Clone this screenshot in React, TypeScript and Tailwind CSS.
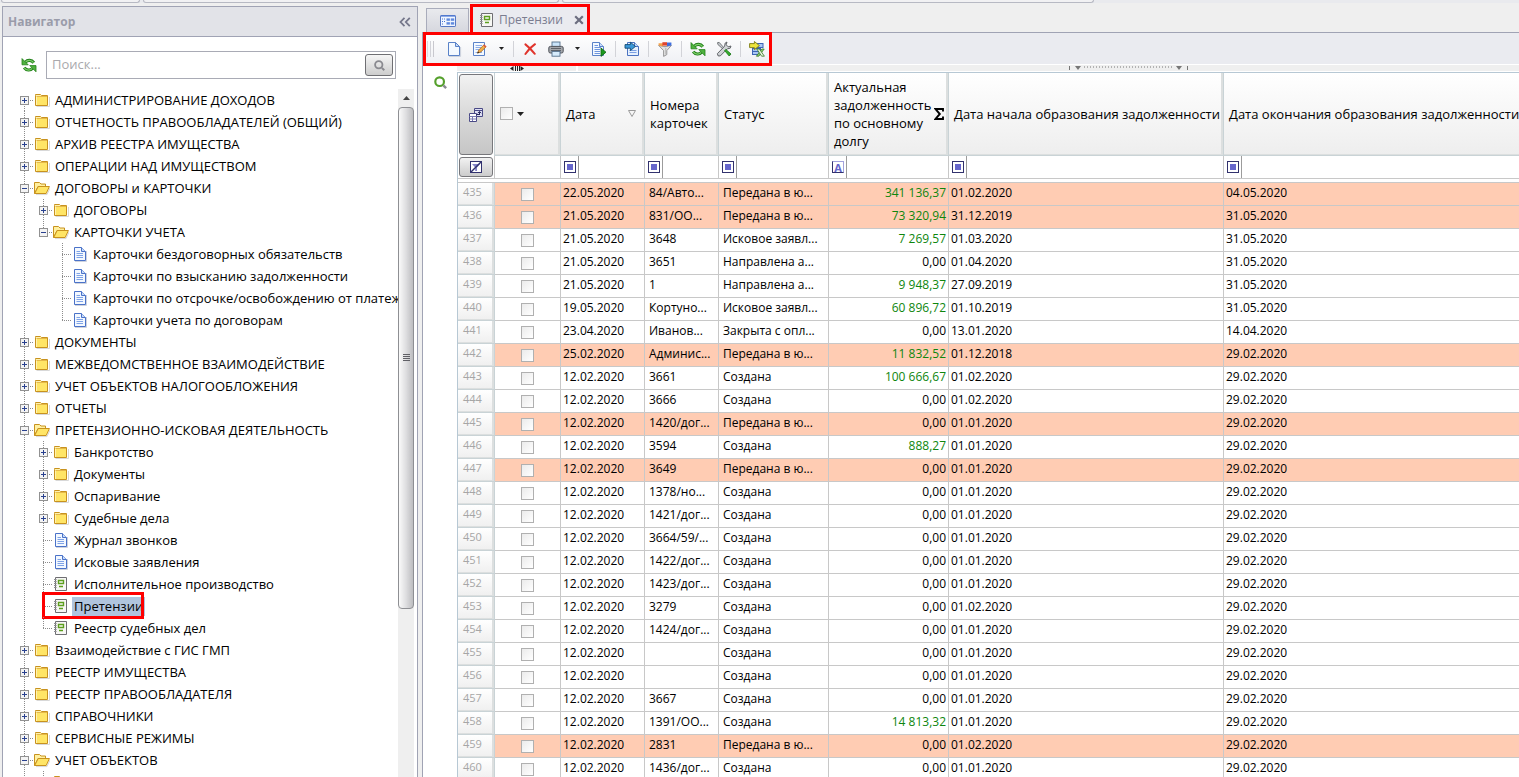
import React from "react";

/* ---------- icons ---------- */

type IconProps = { className?: string };

const Svg = ({ children, className = "size-4", box = "0 0 16 16" }: { children: React.ReactNode; className?: string; box?: string }) => (
  <svg viewBox={box} className={`shrink-0 ${className}`} fill="none" aria-hidden="true">
    {children}
  </svg>
);

const RefreshIcon = ({ className }: IconProps) => (
  <Svg className={className}>
    <path d="M4.4 5.2C6.6 2.6 10.6 2.8 12.8 5.8" stroke="#23801a" strokeWidth="3.2" />
    <path d="M4.4 5.2C6.6 2.6 10.6 2.8 12.6 5.6" stroke="#7fd06c" strokeWidth="1.3" />
    <path d="M1 1.6V7.8H7.2Z" fill="#4fb33e" stroke="#23801a" strokeWidth=".8" strokeLinejoin="round" />
    <path d="M11.6 11.2C9.4 13.8 5.4 13.6 3.2 10.6" stroke="#23801a" strokeWidth="3.2" />
    <path d="M11.6 11.2C9.4 13.8 5.4 13.6 3.4 10.8" stroke="#7fd06c" strokeWidth="1.3" />
    <path d="M15 14.8V8.6H8.8Z" fill="#4fb33e" stroke="#23801a" strokeWidth=".8" strokeLinejoin="round" />
  </Svg>
);

const FolderIcon = () => (
  <Svg>
    <path d="M2.5 14.5H15.5V5" stroke="#d8d8d8" />
    <path d="M1.5 3.5V2.5H6.5L7.5 3.5H13.5V13.5H1.5Z" fill="#fff2b0" stroke="#c8921e" />
    <path d="M2.5 4.5H13" stroke="#e5b84a" />
    <rect x="3" y="5" width="10" height="8" fill="#ffe566" />
  </Svg>
);

const FolderOpenIcon = () => (
  <Svg>
    <path d="M2 14.6H13L16 8" stroke="#d8d8d8" />
    <path d="M.5 13.5V2.5H5.5L7 4H11.5V6.5H4Z" fill="#fff0a0" stroke="#c8921e" />
    <path d="M.7 13.5L4.2 6.5H15.4L12.2 13.5Z" fill="#ffe566" stroke="#c8921e" strokeLinejoin="round" />
  </Svg>
);

const DocIcon = () => (
  <Svg>
    <path d="M3 15.5H14.5V5" stroke="#cfd3dd" />
    <path d="M2.5 1.5H9.5L13.5 5.5V14.5H2.5Z" fill="#f3f8ff" stroke="#4a72c8" />
    <path d="M9.5 1.5V5.5H13.5" fill="#c8dcfa" stroke="#4a72c8" />
    <path d="M4.5 5.5H8M4.5 7.5H11M4.5 9.5H11M4.5 11.5H11" stroke="#7fa3e6" />
  </Svg>
);

const JournalIcon = () => (
  <Svg>
    <path d="M2.5 1.5H13.5V14.5H2.5Z" fill="#f7f7f5" stroke="#6e6e72" />
    <path d="M1 3.5H3.6M1 5.5H3.6M1 7.5H3.6M1 9.5H3.6M1 11.5H3.6" stroke="#8c8c90" />
    <path d="M5.5 4.5H10.5V7.5H5.5ZM6 10.5H10" stroke="#5c9e1e" strokeWidth="1.4" />
  </Svg>
);

const NewIcon = () => (
  <Svg>
    <path d="M3 15.4H14.6V6" stroke="#c9cfdb" />
    <path d="M2.5 1.5H9.5L13.5 5.5V14.5H2.5Z" fill="#f4f9ff" stroke="#5a82c8" />
    <path d="M9.5 1.5V5.5H13.5Z" fill="#c6dafa" stroke="#5a82c8" />
  </Svg>
);

const EditIcon = () => (
  <Svg>
    <path d="M1.5 1.5H12.5V14.5H1.5Z" fill="#f4f9ff" stroke="#5a82c8" />
    <path d="M3.5 4.5H10M3.5 6.5H9M3.5 8.5H7M3.5 11.5H10" stroke="#8caCE6" />
    <path d="M5.6 12L6.8 9L12 3.8L14 5.8L8.8 11Z" fill="#f0b04a" stroke="#a8641e" strokeWidth=".8" />
    <path d="M11.2 4.6L13.2 6.6L14.4 5.4L12.4 3.4Z" fill="#e0523c" />
    <path d="M5.2 12.6L7.2 11.8L6 10.6Z" fill="#222" />
  </Svg>
);

const DeleteIcon = () => (
  <Svg>
    <path d="M3.4 3.4C6 5.4 9.6 9 12.8 12.8M13 3.2C9.4 5.6 6.2 9 3.4 13" stroke="#e0342c" strokeWidth="2" strokeLinecap="round" />
  </Svg>
);

const PrintIcon = () => (
  <Svg>
    <rect x="4" y="1" width="8" height="5" fill="#c9e4fa" stroke="#54708c" strokeWidth=".9" />
    <rect x=".8" y="5.4" width="14.4" height="6.6" rx="1.6" fill="#a4a7ac" stroke="#50545c" />
    <path d="M3 7.5H13M3 9.5H13" stroke="#5f636a" />
    <rect x="4" y="10.4" width="8" height="4.8" fill="#d6ebfb" stroke="#54708c" strokeWidth=".9" />
  </Svg>
);

const RunIcon = () => (
  <Svg>
    <path d="M1.5 1.5H8.5L12.5 5.5V14.5H1.5Z" fill="#f4f9ff" stroke="#5a82c8" />
    <path d="M8.5 1.5V5.5H12.5" fill="#c6dafa" stroke="#5a82c8" />
    <path d="M3.5 4.5H7M3.5 6.5H10M3.5 8.5H9M3.5 10.5H9M3.5 12.5H9" stroke="#6f96de" />
    <path d="M10 7L15 11.2L10 15.4Z" fill="#1c9a1c" stroke="#0c6210" strokeWidth=".8" />
  </Svg>
);

const ImportIcon = () => (
  <Svg>
    <path d="M3.5 1.5H10.5L14.5 5.5V14.5H3.5Z" fill="#e6f0fe" stroke="#4a72c0" />
    <path d="M10.5 1.5V5.5H14.5" fill="#c6dafa" stroke="#4a72c0" />
    <path d="M5.5 9.5H12.5M5.5 11.5H12.5" stroke="#7ba0e4" />
    <path d="M1 3.6H6.4V1.2L11.4 5.4L6.4 9.6V7.2H1Z" fill="#3a98da" stroke="#12496f" strokeWidth=".9" />
  </Svg>
);

const FunnelIcon = () => (
  <Svg>
    <path d="M1.6 4.4Q8 7 14.4 4.4L9.8 9.6V13.6L6.6 15.4V9.6Z" fill="#e4e4e4" stroke="#8c8c8c" strokeWidth=".9" />
    <path d="M8.8 7V13.4" stroke="#b4b4b4" />
    <path d="M1.6 2.2H6V5.4L1.6 4.4Z" fill="#f5a24a" />
    <path d="M5.4 1.2H10V4.6H5.4Z" fill="#e0442c" />
    <path d="M10 1.6H14.4V4.4L10 5.2Z" fill="#3e6ee0" />
  </Svg>
);

const ToolsIcon = () => (
  <Svg>
    <path d="M1.6 1.6L3.2 1.4L9 8L8 9L1.8 3.4Z" fill="#c8ccd0" stroke="#5a5e62" strokeWidth=".8" />
    <path d="M11 1L10.2 3.8L12.2 5.8L15 5L14.2 7.2L11.4 7.8L4.2 15L2 14.8L1.4 12.6L8.6 5.2L9.2 2Z" fill="#d0d3d6" stroke="#56595d" strokeWidth=".9" strokeLinejoin="round" />
    <path d="M8.6 9.6L9.8 8.4L15 13L13.2 15Z" fill="#35b02c" stroke="#147010" strokeWidth=".8" />
  </Svg>
);

const ExportIcon = () => (
  <Svg>
    <rect x="8" y="2.5" width="6" height="4" fill="#a9c6f5" stroke="#3c64b4" />
    <rect x="3.5" y="7.5" width="8" height="6" fill="#a9c6f5" stroke="#3c64b4" />
    <path d="M4 10.5H11" stroke="#3c64b4" />
    <path d="M.6 2.6H5.4V.5L10.4 4.6L5.4 8.7V6.6H.6Z" fill="#ece43c" stroke="#7c7a10" strokeWidth=".9" />
    <path d="M15.2 8H12.8L7.4 15.2H9.8Z" fill="#8ed274" stroke="#3a7a28" strokeWidth=".8" />
    <path d="M7.8 8H10.4L15.4 15.2H12.6Z" fill="#e4f4dc" stroke="#3a7a28" strokeWidth=".8" />
  </Svg>
);

const FormIcon = () => (
  <Svg>
    <rect x=".5" y="2.5" width="15" height="11" rx=".6" fill="#f0f6ff" stroke="#5578c4" />
    <path d="M1 3H15" stroke="#4f7ad6" strokeWidth="1.2" />
    <path d="M2 6H3M4 6H5M2 8.5H3M4 8.5H5M2 11H3" stroke="#4472d4" />
    <rect x="6.5" y="5.4" width="3.4" height="2.4" fill="#5f89de" />
    <rect x="10.8" y="5.4" width="3.4" height="2.4" fill="#5f89de" />
    <rect x="6.5" y="9.2" width="3.4" height="2.4" fill="#5f89de" />
    <rect x="10.8" y="9.2" width="3.4" height="2.4" fill="#5f89de" />
  </Svg>
);

const Lens = ({ color, className = "size-3" }: { color: string; className?: string }) => (
  <Svg className={className} box="0 0 12 12">
    <circle cx="5.2" cy="5.2" r="4" stroke={color} strokeWidth="2" />
    <path d="M8.6 8.6L11.2 11.2" stroke="#8a8a90" strokeWidth="2.2" />
  </Svg>
);

const ChooserIcon = () => (
  <Svg>
    <path d="M6.5 1.5H14.5V9.5H6.5Z" fill="#dfe0f4" stroke="#4a4a86" />
    <path d="M6.5 3.5H14.5" stroke="#4a4a86" />
    <path d="M1.5 6.5H8.5V14.5H1.5Z" fill="#fff" stroke="#4a4a86" />
    <path d="M1.5 9.5H8.5M1.5 12H8.5M4.5 9.5V14" stroke="#7a7ab0" />
    <path d="M8 7.5H12M11.5 8V5M9.8 6.2L11.5 4.4L13.2 6.2" stroke="#2a2a60" />
  </Svg>
);

const ClearFilterIcon = () => (
  <Svg className="h-3 w-3" box="0 0 12 12">
    <rect x=".5" y=".5" width="11" height="11" fill="#fff" stroke="#32326e" />
    <path d="M2 3H10L7 6.4V10H5.2V6.4Z" fill="#8484c8" />
    <path d="M.5 11.5L11.5 .5" stroke="#32326e" strokeWidth="1.4" />
  </Svg>
);

const SquareIcon = () => (
  <Svg className="h-3 w-3" box="0 0 12 12">
    <rect x=".5" y=".5" width="11" height="11" fill="#fff" stroke="#32326e" />
    <rect x="3" y="3" width="6" height="6" fill="#6666cc" />
  </Svg>
);

const Caret = ({ className = "h-1 w-[7px]" }: IconProps) => (
  <Svg className={className} box="0 0 7 4">
    <path d="M0 0H7L3.5 4Z" fill="#222" />
  </Svg>
);

/* ---------- tree ---------- */

type Kind = "closed" | "open" | "doc" | "journal";
type Node = { label: string; depth: number; kind: Kind; last?: boolean; selected?: boolean; guides?: boolean[] };

const f = (label: string, depth: number, last = false): Node => ({ label, depth, kind: "closed", last });
const o = (label: string, depth: number, last = false): Node => ({ label, depth, kind: "open", last });
const d = (label: string, depth: number, last = false, guides?: boolean[]): Node => ({ label, depth, kind: "doc", last, guides });
const j = (label: string, depth: number, last = false, selected = false): Node => ({ label, depth, kind: "journal", last, selected });

const TREE: Node[] = [
  f("АДМИНИСТРИРОВАНИЕ ДОХОДОВ", 0),
  f("ОТЧЕТНОСТЬ ПРАВООБЛАДАТЕЛЕЙ (ОБЩИЙ)", 0),
  f("АРХИВ РЕЕСТРА ИМУЩЕСТВА", 0),
  f("ОПЕРАЦИИ НАД ИМУЩЕСТВОМ", 0),
  o("ДОГОВОРЫ и КАРТОЧКИ", 0),
  f("ДОГОВОРЫ", 1),
  o("КАРТОЧКИ УЧЕТА", 1, true),
  d("Карточки бездоговорных обязательств", 2, false, [true, false]),
  d("Карточки по взысканию задолженности", 2, false, [true, false]),
  d("Карточки по отсрочке/освобождению от платеж", 2, false, [true, false]),
  d("Карточки учета по договорам", 2, true, [true, false]),
  f("ДОКУМЕНТЫ", 0),
  f("МЕЖВЕДОМСТВЕННОЕ ВЗАИМОДЕЙСТВИЕ", 0),
  f("УЧЕТ ОБЪЕКТОВ НАЛОГООБЛОЖЕНИЯ", 0),
  f("ОТЧЕТЫ", 0),
  o("ПРЕТЕНЗИОННО-ИСКОВАЯ ДЕЯТЕЛЬНОСТЬ", 0),
  f("Банкротство", 1),
  f("Документы", 1),
  f("Оспаривание", 1),
  f("Судебные дела", 1),
  d("Журнал звонков", 1),
  d("Исковые заявления", 1),
  j("Исполнительное производство", 1),
  j("Претензии", 1, false, true),
  j("Реестр судебных дел", 1, true),
  f("Взаимодействие с ГИС ГМП", 0),
  f("РЕЕСТР ИМУЩЕСТВА", 0),
  f("РЕЕСТР ПРАВООБЛАДАТЕЛЯ", 0),
  f("СПРАВОЧНИКИ", 0),
  f("СЕРВИСНЫЕ РЕЖИМЫ", 0),
  o("УЧЕТ ОБЪЕКТОВ", 0),
  f("", 1),
];

const Guide = ({ from, to, branch }: { from: number; to: number; branch?: boolean }) => (
  <svg viewBox="0 0 19 22" className="h-[22px] w-[19px] shrink-0" aria-hidden="true">
    {to > from && <path d={`M9.5 ${from}V${to}`} stroke="#8c8c8c" strokeDasharray="1 1" />}
    {branch && <path d="M9 11.5H19" stroke="#8c8c8c" strokeDasharray="1 1" />}
  </svg>
);

const Toggle = ({ open }: { open: boolean }) => (
  <button type="button" aria-label={open ? "Свернуть" : "Развернуть"} className="absolute top-[7px] left-[5px] block size-[9px]">
    <svg viewBox="0 0 9 9" className="size-[9px]">
      <rect x=".5" y=".5" width="8" height="8" fill="#f4f4f4" stroke="#919191" />
      <path d={open ? "M2 4.5H7" : "M2 4.5H7M4.5 2V7"} stroke="#29418f" />
    </svg>
  </button>
);

function TreeRow({ node, first }: { node: Node; first: boolean }) {
  const folder = node.kind === "closed" || node.kind === "open";
  return (
    <li className="relative flex h-[22px] items-center whitespace-nowrap">
      {Array.from({ length: node.depth }, (_, i) => (
        <Guide key={i} from={0} to={!node.guides || node.guides[i] ? 22 : 0} />
      ))}
      <span className="relative flex">
        <Guide from={first ? 11 : 0} to={node.last ? 11 : 22} branch />
        {folder && <Toggle open={node.kind === "open"} />}
      </span>
      {node.kind === "closed" && <FolderIcon />}
      {node.kind === "open" && <FolderOpenIcon />}
      {node.kind === "doc" && <DocIcon />}
      {node.kind === "journal" && <JournalIcon />}
      {node.label && (
        <a href="#" className={`ml-[3px] px-0.5 text-[13px] leading-[19px] text-black ${node.selected ? "bg-[#b0c4de]" : ""}`}>
          {node.label}
        </a>
      )}
      {node.selected && <span className="pointer-events-none absolute -top-[3px] left-[27px] h-[27px] w-[102px] border-[3px] border-[#fe0000]" />}
    </li>
  );
}

function Navigator() {
  return (
    <aside className="mt-[3px] ml-0.5 flex w-[416px] shrink-0 flex-col overflow-hidden border border-b-0 border-[#a0a3b4] bg-white">
      <header className="flex h-[30px] shrink-0 items-center justify-between border-b border-[#a0a3b4] bg-[#e2e3e8] px-[5px]">
        <h2 className="text-[12px] font-bold text-[#9a9caa]">Навигатор</h2>
        <button type="button" aria-label="Свернуть панель" className="mr-px">
          <svg viewBox="0 0 12 10" className="h-[10px] w-3" fill="none" stroke="#74768a" strokeWidth="1.8">
            <path d="M5.5 .8L1.5 5L5.5 9.2M10.8 .8L6.8 5L10.8 9.2" />
          </svg>
        </button>
      </header>
      <div className="flex items-center gap-[9px] pt-[14px] pr-[21px] pl-[18px]">
        <button type="button" aria-label="Обновить дерево">
          <RefreshIcon className="size-4" />
        </button>
        <label className="flex h-7 min-w-0 flex-1 items-center border border-[#a9abb5] pr-0.5 pl-[5px]">
          <input aria-label="Поиск" placeholder="Поиск..." className="min-w-0 flex-1 text-[13px] outline-none placeholder:text-[#a9a9ad]" />
          <button type="button" aria-label="Найти" className="flex h-[22px] w-7 items-center justify-center rounded-[3px] border border-[#6f6f73] bg-linear-to-b from-[#f6f6f6] to-[#cdcdcd]">
            <Lens color="#8a8a90" className="size-[11px]" />
          </button>
        </label>
      </div>
      <div className="mt-[10px] mr-[3px] flex min-h-0 flex-1">
        <ul className="min-w-0 flex-1 overflow-hidden pl-3">
          {TREE.map((n, i) => (
            <TreeRow key={n.label + i} node={n} first={i === 0} />
          ))}
        </ul>
        <div className="flex w-4 shrink-0 flex-col bg-[#efefef]">
          <button type="button" aria-label="Прокрутить вверх" className="flex h-[18px] shrink-0 items-center justify-center">
            <svg viewBox="0 0 7 4" className="h-1 w-[7px]">
              <path d="M0 4H7L3.5 0Z" fill="#444" />
            </svg>
          </button>
          <div className="flex h-[73%] items-center justify-center rounded-sm border border-[#8e8f93] bg-linear-to-r from-[#fafafa] via-[#dedee0] to-[#bdbdc0]">
            <svg viewBox="0 0 7 8" className="h-2 w-[7px]">
              <path d="M0 .5H7M0 2.5H7M0 4.5H7M0 6.5H7" stroke="#606066" />
            </svg>
          </div>
        </div>
      </div>
    </aside>
  );
}

/* ---------- toolbar ---------- */

const Tool = ({ label, children }: { label: string; children: React.ReactNode }) => (
  <button type="button" aria-label={label} title={label} className="flex h-6 w-[26px] items-center justify-center">
    {children}
  </button>
);

const ToolMenu = ({ label }: { label: string }) => (
  <button type="button" aria-label={label} className="flex h-6 w-[17px] items-center justify-center">
    <Caret className="h-[3px] w-[5px]" />
  </button>
);

const Sep = () => (
  <span className="flex w-[7px] justify-center">
    <span className="h-4 w-px bg-[#d2d3d8]" />
  </span>
);

function Toolbar() {
  return (
    <div className="flex h-[31px] bg-[#eaebf0]">
      <div role="toolbar" className="relative flex items-center bg-linear-to-b from-white to-[#eff0f4] pr-px pl-[3px]">
        <span className="mr-[7px] flex h-4 w-[7px] justify-between">
          <span className="w-px bg-[#dcdce0]" />
          <span className="w-px bg-[#d2d2d8]" />
          <span className="w-px bg-[#c8c8ce]" />
        </span>
        <Tool label="Создать"><NewIcon /></Tool>
        <Tool label="Редактировать"><EditIcon /></Tool>
        <ToolMenu label="Варианты редактирования" />
        <Sep />
        <Tool label="Удалить"><DeleteIcon /></Tool>
        <Tool label="Печать"><PrintIcon /></Tool>
        <ToolMenu label="Варианты печати" />
        <Tool label="Выполнить"><RunIcon /></Tool>
        <Sep />
        <Tool label="Импорт"><ImportIcon /></Tool>
        <Sep />
        <Tool label="Фильтр"><FunnelIcon /></Tool>
        <Sep />
        <Tool label="Обновить"><RefreshIcon /></Tool>
        <Tool label="Настройки"><ToolsIcon /></Tool>
        <Sep />
        <Tool label="Экспорт"><ExportIcon /></Tool>
        <span className="pointer-events-none absolute -inset-x-px -top-px -bottom-0.5 border-[3px] border-[#fe0000]" />
      </div>
    </div>
  );
}

function Tabs() {
  return (
    <div className="flex h-[30px] items-end border-b border-[#a0a3b4] bg-[#efefef] pl-1">
      <button type="button" aria-label="Главная форма" className="flex h-6 w-[43px] items-center justify-center border border-b-0 border-[#a9acbb] bg-linear-to-b from-[#e9eaee] to-[#d6d7de]">
        <FormIcon />
      </button>
      <div className="relative ml-[3px] flex h-[26px] w-[116px] items-center bg-[#eaebf0] pt-0.5 pl-[7px]">
        <JournalIcon />
        <span className="ml-1 text-[12px] text-[#7b7d90]">Претензии</span>
        <button type="button" aria-label="Закрыть вкладку" className="ml-auto pr-1">
          <svg viewBox="0 0 10 10" className="size-[10px]" stroke="#6c6e80" strokeWidth="2.2">
            <path d="M1.2 1.2L8.8 8.8M8.8 1.2L1.2 8.8" />
          </svg>
        </button>
        <span className="pointer-events-none absolute -inset-x-0.5 -top-0.5 -bottom-px border-[3px] border-b-0 border-[#fe0000]" />
      </div>
    </div>
  );
}

/* ---------- grid ---------- */

const J = "Передана в ю...";
const C = "Создана";

type Row = [no: number, date: string, cards: string, status: string, debt: string, start: string, end: string];

const ROWS: Row[] = [
  [435, "22.05.2020", "84/Авто...", J, "341 136,37", "01.02.2020", "04.05.2020"],
  [436, "21.05.2020", "831/ОО...", J, "73 320,94", "31.12.2019", "31.05.2020"],
  [437, "21.05.2020", "3648", "Исковое заявл...", "7 269,57", "01.03.2020", "31.05.2020"],
  [438, "21.05.2020", "3651", "Направлена а...", "0,00", "01.04.2020", "31.05.2020"],
  [439, "21.05.2020", "1", "Направлена а...", "9 948,37", "27.09.2019", "31.05.2020"],
  [440, "19.05.2020", "Кортуно...", "Исковое заявл...", "60 896,72", "01.10.2019", "31.05.2020"],
  [441, "23.04.2020", "Иванов...", "Закрыта с опл...", "0,00", "13.01.2020", "14.04.2020"],
  [442, "25.02.2020", "Админис...", J, "11 832,52", "01.12.2018", "29.02.2020"],
  [443, "12.02.2020", "3661", C, "100 666,67", "01.02.2020", "29.02.2020"],
  [444, "12.02.2020", "3666", C, "0,00", "01.02.2020", "29.02.2020"],
  [445, "12.02.2020", "1420/дог...", J, "0,00", "01.01.2020", "29.02.2020"],
  [446, "12.02.2020", "3594", C, "888,27", "01.01.2020", "29.02.2020"],
  [447, "12.02.2020", "3649", J, "0,00", "01.01.2020", "29.02.2020"],
  [448, "12.02.2020", "1378/но...", C, "0,00", "01.01.2020", "29.02.2020"],
  [449, "12.02.2020", "1421/дог...", C, "0,00", "01.01.2020", "29.02.2020"],
  [450, "12.02.2020", "3664/59/...", C, "0,00", "01.01.2020", "29.02.2020"],
  [451, "12.02.2020", "1422/дог...", C, "0,00", "01.01.2020", "29.02.2020"],
  [452, "12.02.2020", "1423/дог...", C, "0,00", "01.01.2020", "29.02.2020"],
  [453, "12.02.2020", "3279", C, "0,00", "01.02.2020", "29.02.2020"],
  [454, "12.02.2020", "1424/дог...", C, "0,00", "01.01.2020", "29.02.2020"],
  [455, "12.02.2020", "", C, "0,00", "01.01.2020", "29.02.2020"],
  [456, "12.02.2020", "", C, "0,00", "01.01.2020", "29.02.2020"],
  [457, "12.02.2020", "3667", C, "0,00", "01.01.2020", "29.02.2020"],
  [458, "12.02.2020", "1391/ОО...", C, "14 813,32", "01.01.2020", "29.02.2020"],
  [459, "12.02.2020", "2831", J, "0,00", "01.02.2020", "29.02.2020"],
  [460, "12.02.2020", "1436/дог...", C, "0,00", "01.01.2020", "29.02.2020"],
];

const HeadCell = ({ children, className = "" }: { children?: React.ReactNode; className?: string }) => (
  <th className="group h-[83px] border-r border-b border-[#c9d3d6] p-0 text-left text-[13px] leading-[18px] font-normal last:border-r-0">
    <div className={`flex h-full items-center border-r-2 border-b border-[#dcdfdf] bg-linear-to-b from-white to-[#eeeeee] pl-[5px] group-last:border-r-0 ${className}`}>{children}</div>
  </th>
);

const FilterCell = ({ label, letter }: { label: string; letter?: boolean }) => (
  <td className="h-[23px] border-r border-b border-[#c8c8c8] p-0 last:border-r-0">
    <label className="flex h-full items-stretch gap-0.5 pl-[3px]">
      <span className="flex w-3 items-center">
        {letter ? (
          <span className="flex h-3 w-3 items-center justify-center border border-t-[#a3a3dd] border-r-[#a3a3dd] border-b-[#32326e] border-l-[#32326e] text-[11px] leading-none font-bold text-[#6666cc]">A</span>
        ) : (
          <SquareIcon />
        )}
      </span>
      <input aria-label={label} className="h-full min-w-0 flex-1 border-l border-[#9c9c9c] px-1 text-[12px] outline-none" />
    </label>
  </td>
);

const Check = ({ label }: { label: string }) => (
  <input type="checkbox" aria-label={label} className="block size-[13px] shrink-0 appearance-none border border-[#b0b0b0] bg-linear-to-br from-[#ebebeb] to-white" />
);

function Grid() {
  const cell = "truncate border-r border-b border-[#c8c8c8] p-0 pb-0.5 leading-[18px] last:border-r-0";
  return (
    <table className="w-full table-fixed border-separate border-spacing-0 border-t border-l border-[#b7c8d4] text-black">
      <colgroup>
        <col className="w-[37px]" />
        <col className="w-[66px]" />
        <col className="w-[84px]" />
        <col className="w-[74px]" />
        <col className="w-[110px]" />
        <col className="w-[120px]" />
        <col className="w-[275px]" />
        <col />
      </colgroup>
      <thead>
        <tr>
          <th className="h-[83px] border-r border-[#c9d3d6] p-px">
            <button type="button" aria-label="Выбор колонок" className="flex h-full w-full items-center justify-center rounded-[3px] border border-[#77777b] bg-linear-to-b from-[#f2f2f2] via-[#d9d9d9] to-[#c6c6c6]">
              <ChooserIcon />
            </button>
          </th>
          <HeadCell className="gap-1">
            <Check label="Выбрать все" />
            <Caret />
          </HeadCell>
          <HeadCell className="justify-between pr-1.5">
            Дата
            <svg viewBox="0 0 8 7" className="h-[7px] w-2" fill="none">
              <path d="M.5 .5H7.5L4 6.5Z" stroke="#9a9a9a" />
            </svg>
          </HeadCell>
          <HeadCell>Номера карточек</HeadCell>
          <HeadCell>Статус</HeadCell>
          <HeadCell className="justify-between pr-0.5">
            <span className="w-[98px]">Актуальная задолженность по основному долгу</span>
            <svg viewBox="0 0 10 12" className="h-3 w-[10px] shrink-0" fill="none" aria-label="Сумма">
              <path d="M9 3.4V1H1.4L5.8 6L1.4 11H9V8.6" stroke="#000" strokeWidth="1.9" />
            </svg>
          </HeadCell>
          <HeadCell className="whitespace-nowrap">Дата начала образования задолженности</HeadCell>
          <HeadCell className="whitespace-nowrap">Дата окончания образования задолженности</HeadCell>
        </tr>
        <tr>
          <td className="h-[23px] border-r border-b border-[#c8c8c8] p-px">
            <button type="button" aria-label="Очистить фильтр" className="flex h-full w-full items-center justify-center rounded-[3px] border border-[#77777b] bg-linear-to-b from-[#f2f2f2] to-[#cccccc]">
              <ClearFilterIcon />
            </button>
          </td>
          <td className="border-r border-b border-[#c8c8c8]" />
          <FilterCell label="Фильтр: дата" />
          <FilterCell label="Фильтр: номера карточек" />
          <FilterCell label="Фильтр: статус" />
          <FilterCell label="Фильтр: задолженность" letter />
          <FilterCell label="Фильтр: дата начала" />
          <FilterCell label="Фильтр: дата окончания" />
        </tr>
        <tr>
          <td colSpan={8} className="h-1 border-b border-[#c8c8c8] p-0" />
        </tr>
      </thead>
      <tbody className="text-[12px]">
        {ROWS.map(([no, date, cards, status, debt, start, end]) => (
          <tr key={no} className={`h-[23px] ${status === J ? "bg-[#ffccb3]" : "bg-white"}`}>
            <th scope="row" className="h-[23px] border-r border-b border-[#c9d3d6] p-0 text-left text-[11px] font-normal text-[#a6a6a6]">
              <div className="flex h-[22px] items-center border-r-2 border-b border-[#dcdfdf] bg-linear-to-b from-white to-[#f0f0f0] pb-0.5 pl-[5px]">{no}</div>
            </th>
            <td className="border-r border-b border-[#c8c8c8] p-0">
              <div className="flex justify-center">
                <Check label={`Выбрать строку ${no}`} />
              </div>
            </td>
            <td className={`${cell} pl-0.5`}>{date}</td>
            <td className={`${cell} pl-1`}>{cards}</td>
            <td className={`${cell} pl-1`}>{status}</td>
            <td className={`${cell} pr-0.5 text-right ${debt === "0,00" ? "" : "text-[#0e860e]"}`}>{debt}</td>
            <td className={`${cell} pl-0.5`}>{start}</td>
            <td className={`${cell} pl-0.5`}>{end}</td>
          </tr>
        ))}
      </tbody>
    </table>
  );
}

function SplitterStrip() {
  return (
    <div className="flex h-2 gap-0.5 pt-px pb-px">
      <div className="flex w-[119px] items-center justify-center bg-[#efefef]">
        <svg viewBox="0 0 14 5" className="h-[5px] w-[14px]">
          <path d="M3.5 0V5L0 2.5ZM10.5 0V5L14 2.5ZM5 0H6V5H5ZM7 0H8V5H7ZM9 0H10V5H9Z" fill="#222" />
        </svg>
      </div>
      <div className="flex flex-1 items-center justify-center bg-[#efefef] pl-[160px]">
        <svg viewBox="0 0 119 4" className="h-1 w-[119px]">
          <path d="M0 0H1V4H0ZM118 0H119V4H118ZM6 0H12L9 4ZM107 0H113L110 4Z" fill="#777" />
          <path d="M15 1H104" stroke="#777" strokeDasharray="1 2" />
        </svg>
      </div>
    </div>
  );
}

export default function App() {
  return (
    <div className="flex h-screen flex-col overflow-hidden bg-[#e9eaee] font-['Open_Sans','Noto_Sans',sans-serif]">
      <div className="flex h-[3px] shrink-0 gap-[3px] pl-px">
        <div className="w-[139px] rounded-b border border-t-0 border-[#b7b9c3] bg-[#f1f1f3]" />
        <div className="w-[416px] rounded-b border border-t-0 border-[#b7b9c3] bg-[#f1f1f3]" />
        <div className="w-[532px] rounded-b border border-t-0 border-[#b7b9c3] bg-[#f1f1f3]" />
      </div>
      <div className="flex min-h-0 flex-1 gap-1 bg-[#efefef]">
        <Navigator />
        <main className="flex min-w-0 flex-1 flex-col">
          <Tabs />
          <div className="relative z-10 border-l border-[#a0a3b4] bg-[#eaebf0] pl-px">
            <Toolbar />
          </div>
          <div className="flex min-h-0 flex-1 border-l border-[#a0a3b4] bg-white">
            <div className="w-[34px] shrink-0 pt-3 pl-[11px]">
              <button type="button" aria-label="Поиск по таблице" className="block">
                <Lens color="#55a02c" className="size-[13px]" />
              </button>
            </div>
            <div className="min-w-0 flex-1 overflow-hidden">
              <SplitterStrip />
              <Grid />
            </div>
          </div>
        </main>
      </div>
    </div>
  );
}
